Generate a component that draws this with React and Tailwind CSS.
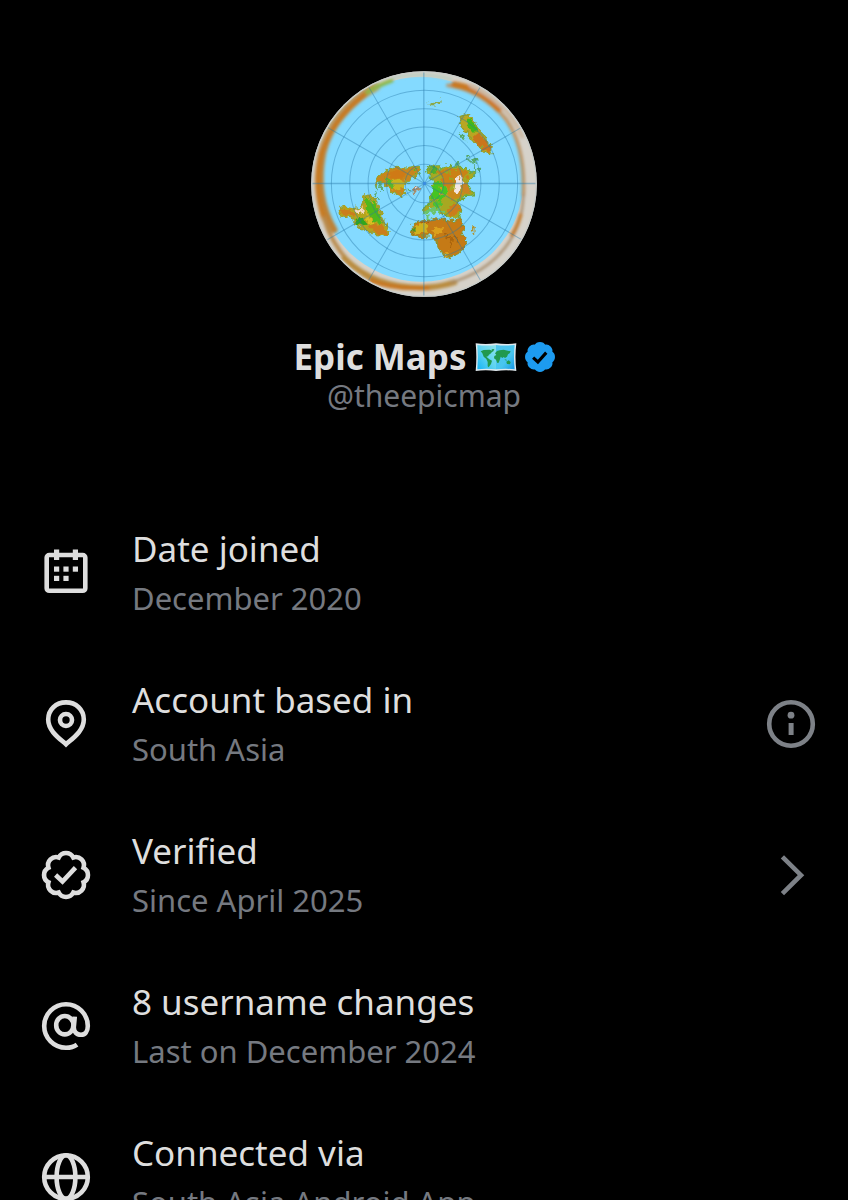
import React from 'react';

const SCALLOP =
  'M43.55 18.73 A8.2 8.2 0 0 1 43.55 33.27 A8.2 8.2 0 0 1 33.27 43.55 A8.2 8.2 0 0 1 18.73 43.55 A8.2 8.2 0 0 1 8.45 33.27 A8.2 8.2 0 0 1 8.45 18.73 A8.2 8.2 0 0 1 18.73 8.45 A8.2 8.2 0 0 1 33.27 8.45 A8.2 8.2 0 0 1 43.55 18.73 Z';

const Icon = ({ children, className = '' }) => (
  <svg
    viewBox="0 0 52 52"
    className={`size-[52px] shrink-0 ${className}`}
    fill="none"
    stroke="currentColor"
    strokeWidth="4.6"
    aria-hidden="true"
  >
    {children}
  </svg>
);

const CalendarIcon = () => (
  <Icon>
    <rect x="6.7" y="8" width="38.6" height="35.8" rx="2.6" />
    <g fill="currentColor" stroke="none">
      <rect x="14" y="2.5" width="5.2" height="10.5" />
      <rect x="32.8" y="2.5" width="5.2" height="10.5" />
      <rect x="14" y="19.5" width="5.2" height="5.2" />
      <rect x="23.4" y="19.5" width="5.2" height="5.2" />
      <rect x="32.8" y="19.5" width="5.2" height="5.2" />
      <rect x="14" y="28.8" width="5.2" height="5.2" />
      <rect x="23.4" y="28.8" width="5.2" height="5.2" />
    </g>
  </Icon>
);

const PinIcon = () => (
  <Icon>
    <path d="M26 46.3 C19.5 40.5 8.2 33 8.2 21.6 C8.2 11.5 16 4.4 26 4.4 C36 4.4 43.8 11.5 43.8 21.6 C43.8 33 32.5 40.5 26 46.3 Z" />
    <circle cx="26" cy="22" r="6" />
  </Icon>
);

const VerifiedIcon = () => (
  <Icon>
    <path d={SCALLOP} />
    <path d="M15.6 26 L22.5 32.5 L35.5 18.6" />
  </Icon>
);

const AtIcon = () => (
  <Icon>
    <path d="M37 44.6 C34 46.8 30 47.8 26 47.8 C14 47.8 4.2 38 4.2 26 C4.2 14 14 4.2 26 4.2 C38 4.2 47.8 14 47.8 26 C47.8 31.5 45 34.8 41 34.8 C36.5 34.8 33.6 31.5 33.8 27 L34.8 16.6" />
    <ellipse cx="24.8" cy="25.2" rx="8.6" ry="9.2" />
  </Icon>
);

const GlobeIcon = () => (
  <Icon>
    <circle cx="26" cy="26" r="21.8" />
    <ellipse cx="26" cy="26" rx="9.4" ry="21.8" />
    <path d="M4 26 H48" />
  </Icon>
);

const InfoIcon = () => (
  <Icon>
    <circle cx="26" cy="26" r="21.8" />
    <circle cx="26" cy="17.2" r="3.4" fill="currentColor" stroke="none" />
    <rect x="23.6" y="25" width="5" height="12" fill="currentColor" stroke="none" />
  </Icon>
);

const ChevronIcon = () => (
  <Icon>
    <path d="M17.4 7.8 L36 26.2 L17.4 44.6" />
  </Icon>
);

// Blue check next to the display name
const BlueBadge = () => (
  <svg viewBox="2 2 48 48" className="size-[30px] shrink-0" role="img" aria-label="Verified account">
    <path d={SCALLOP} fill="#1d9bf0" stroke="#1d9bf0" strokeWidth="4" strokeLinejoin="round" />
    <path d="M15 27 L22.6 34 L36 19" fill="none" stroke="#000" strokeWidth="5" />
  </svg>
);

const MapEmoji = () => (
  <svg viewBox="0 0 126 90" className="h-[30px] w-[42px] shrink-0" role="img" aria-label="World map">
    <defs>
      <linearGradient id="sea" x1="0" y1="1" x2="1" y2="0">
        <stop offset="0" stopColor="#14b4f4" />
        <stop offset="0.5" stopColor="#5fd3f0" />
        <stop offset="1" stopColor="#8ee4ec" />
      </linearGradient>
      <linearGradient id="seaRight" x1="0" y1="0" x2="1" y2="1">
        <stop offset="0" stopColor="#4fc4ec" />
        <stop offset="0.6" stopColor="#48c6f0" />
        <stop offset="1" stopColor="#1597e6" />
      </linearGradient>
    </defs>
    <path d="M2 4 Q32 8 63 4 Q94 8 124 4 Q119 45 124 87 Q94 83 63 87 Q32 83 2 87 Q6 45 2 4 Z" fill="#dfe9ee" />
    <path d="M7 9 Q34 12 63 9 V82 Q34 79 7 82 Q10 45 7 9 Z" fill="url(#sea)" />
    <path d="M63 9 Q92 12 119 9 Q115 45 119 82 Q92 79 63 82 Z" fill="url(#seaRight)" />
    <g fill="#21994e">
      <path d="M17 28 L26 24 L44 23 L53 27 L48 34 L42 38 L39 43 L34 44 L43 52 L51 56 L48 66 L41 76 L38 73 L38 60 L34 51 L26 44 L22 34 Z" />
      <path d="M50 22 L58 21 L55 28 L51 29 Z" />
      <path d="M60 34 L66 27 L74 25 L86 23 L98 26 L107 28 L104 34 L99 37 L96 44 L90 48 L86 45 L82 48 L77 44 L75 52 L71 62 L67 63 L63 53 L57 49 L58 42 L64 39 Z" />
      <path d="M94 59 L101 55 L107 60 L105 67 L96 66 Z" />
      <path d="M88 51 L96 54 L93 56 Z" />
    </g>
  </svg>
);

// Azimuthal map used as the profile picture
const Avatar = () => (
  <svg viewBox="20 19 677 677" className="size-[226px]" role="img" aria-label="Epic Maps profile picture">
    <defs>
      <clipPath id="disc">
        <circle cx="358.5" cy="357.5" r="338" />
      </clipPath>
      <filter id="soft" x="-10%" y="-10%" width="120%" height="120%">
        <feGaussianBlur stdDeviation="4" />
      </filter>
      <filter id="rough" x="-5%" y="-5%" width="110%" height="110%">
        <feTurbulence type="fractalNoise" baseFrequency="0.07" numOctaves="2" seed="4" result="n" />
        <feDisplacementMap in="SourceGraphic" in2="n" scale="26" xChannelSelector="R" yChannelSelector="G" />
        <feGaussianBlur stdDeviation="2" />
      </filter>
    </defs>
    <g clipPath="url(#disc)">
      <rect x="20" y="19" width="677" height="677" fill="#d6d2ca" />
      <circle cx="350" cy="343" r="307" fill="#84daff" />
      <g filter="url(#soft)" fill="none" strokeLinecap="round">
        <path d="M215 66 C130 110 72 180 52 270 C38 350 44 430 82 492" stroke="#b5a878" strokeWidth="26" />
        <path d="M205 72 C130 120 80 180 56 260 C40 340 45 420 90 495" stroke="#bd8135" strokeWidth="19" />
        <path d="M185 88 C120 140 75 195 50 265 C34 330 38 400 58 460" stroke="#c77a20" strokeWidth="14" />
        <path d="M58 460 C85 545 140 610 210 650" stroke="#b98b4e" strokeWidth="12" />
        <path d="M188 84 C208 70 228 60 262 48" stroke="#8cb84a" strokeWidth="12" />
        <path d="M120 580 C180 640 260 668 350 668 C390 668 420 662 450 652" stroke="#b98b3e" strokeWidth="17" />
        <path d="M200 647 C250 668 310 672 370 668" stroke="#c8741a" strokeWidth="12" />
        <path d="M430 62 C490 65 560 110 605 165 C640 215 660 290 656 390" stroke="#b99567" strokeWidth="11" />
        <path d="M450 60 C505 68 545 92 582 132" stroke="#ca7824" strokeWidth="20" />
        <path d="M500 62 C580 100 625 150 652 215" stroke="#cdbba6" strokeWidth="14" />
        <path d="M656 390 C655 450 640 500 600 550 C560 600 500 635 440 652" stroke="#a58a68" strokeWidth="7" />
        <path d="M648 450 C640 480 632 495 622 510" stroke="#c27a2c" strokeWidth="11" />
        <path d="M265 40 C310 28 380 26 440 44" stroke="#b9cdc0" strokeWidth="8" />
      </g>
      <g filter="url(#rough)">
        {/* North America */}
        <path d="M222 338 L240 318 L272 308 L305 310 L338 305 L350 314 L332 330 L318 348 L300 352 L296 370 L303 388 L288 392 L262 378 L246 366 L238 348 L222 352 L217 372 L212 352 Z" fill="#c9861a" stroke="#93a636" strokeWidth="4" />
        <path d="M250 348 L288 342 L306 352 L294 372 L272 376 Z" fill="#c9b41c" />
        <path d="M240 340 L262 350 L268 370 L250 362 Z M320 318 L338 310 L330 326 Z" fill="#58b82a" />
        <path d="M250 322 L290 318 L306 330 L284 340 L256 336 Z" fill="#cf7a18" />
        <path d="M322 370 L340 364 L348 374 L334 392 L322 384 Z" fill="#a98a68" />
        <path d="M330 372 L340 370 L336 382 Z" fill="#f0dde0" />
        <path d="M304 362 L316 356 M308 376 L320 380 M344 330 L352 322" stroke="#5cab70" strokeWidth="5" />
        {/* Asia and Europe */}
        <path d="M366 310 L392 304 L410 310 L440 302 L482 306 L498 322 L512 325 L498 340 L488 352 L500 378 L508 390 L484 392 L466 404 L462 418 L470 440 L466 460 L440 462 L420 448 L398 452 L380 436 L356 440 L360 424 L380 412 L378 394 L392 380 L386 352 L374 330 Z" fill="#a7a820" stroke="#6fa83a" strokeWidth="4" />
        <path d="M400 318 L440 310 L480 316 L490 334 L478 350 L452 352 L436 376 L418 362 L408 338 Z" fill="#ca8118" />
        <path d="M374 312 L394 308 L402 322 L386 326 Z" fill="#4fb02c" />
        <path d="M418 318 L432 314 L436 326 Z M462 312 L476 310 L478 320 Z M436 340 L446 336 L444 350 Z" fill="#8fae24" />
        <path d="M384 358 L410 352 L428 374 L420 398 L398 408 L382 400 Z" fill="#45c522" />
        <path d="M400 362 L412 366 L406 376 Z M408 388 L418 384 L414 396 Z" fill="#c9a41c" />
        <path d="M430 378 L456 372 L482 386 L462 400 L436 406 Z" fill="#c98a1c" />
        <path d="M474 352 L488 356 L498 380 L486 388 L472 376 Z" fill="#c98420" />
        <path d="M424 436 L462 412 L468 440 L444 450 Z" fill="#cc7c1c" />
        <path d="M386 412 L406 408 L416 422 L396 430 Z" fill="#4fc030" />
        <path d="M455 340 L474 332 L472 366 L458 390 L448 384 Z" fill="#f2e6e2" />
        <path d="M350 444 L390 424 L420 440 L396 450 L372 462 Z" fill="#6cc46a" />
        <path d="M360 450 L400 440 L416 452 L380 458 Z M430 452 L446 460 L462 458 L444 466 Z M374 424 L384 430 L374 434 Z" fill="#84daff" />
        {/* Africa */}
        <path d="M320 492 L336 472 L362 464 L396 462 L440 470 L468 464 L478 484 L474 508 L484 522 L478 548 L460 566 L436 576 L412 566 L400 542 L396 518 L376 512 L342 516 L324 508 Z" fill="#c57a14" stroke="#93902a" strokeWidth="4" />
        <path d="M328 490 L352 474 L372 486 L366 506 L336 508 Z" fill="#cfb21c" />
        <path d="M380 490 L420 486 L408 506 L388 508 Z M410 560 L430 558 L440 570 L424 572 Z" fill="#dba01e" />
        <path d="M320 494 L330 484 L330 506 Z" fill="#4c9a22" />
        <path d="M416 510 L440 520 L436 552 M448 512 L462 530 M352 472 L380 478" stroke="#a8620e" strokeWidth="5" fill="none" />
        <path d="M504 486 L514 490 L512 506 L502 502 Z" fill="#b0922e" />
        {/* South America */}
        <path d="M102 434 L118 426 L146 432 L164 428 L178 416 L178 396 L190 388 L212 398 L220 424 L234 452 L240 478 L254 502 L236 510 L206 508 L188 494 L160 484 L140 458 L108 452 Z" fill="#b5a41e" stroke="#9aa030" strokeWidth="4" />
        <path d="M182 398 L206 402 L218 430 L230 458 L232 476 L208 470 L192 446 L182 424 Z" fill="#50b81c" />
        <path d="M190 396 L204 404 L200 414 Z M180 430 L194 440 L188 452 Z" fill="#d0b41e" />
        <path d="M104 434 L140 436 L150 452 L116 450 Z M192 482 L228 476 L250 504 L210 506 Z" fill="#cb7d1c" />
        <path d="M150 462 L176 458 L184 476 L162 482 Z" fill="#30a61c" />
        <path d="M152 438 L174 428 L176 440 L160 450 Z" fill="#f3dcc4" />
        <path d="M184 450 L200 462 L210 480 L192 474 Z" fill="#d9c020" />
        {/* Australia and the islands */}
        <path d="M460 156 L492 150 L508 168 L520 194 L542 216 L562 250 L558 266 L540 262 L518 236 L496 222 L488 206 L472 188 Z" fill="#b9a620" stroke="#8fa030" strokeWidth="4" />
        <path d="M488 158 L508 172 L518 200 L500 200 L486 180 Z" fill="#3fb81c" />
        <path d="M508 208 L534 214 L560 250 L554 262 L534 250 L512 230 Z" fill="#ca751c" />
        <path d="M460 202 L474 210 L486 230 L474 224 Z M498 280 L518 282 L520 298 L506 292 Z M514 314 L530 308 L526 330 Z M482 268 L494 274 L488 280 Z M450 298 L466 292 L462 302 Z" fill="#55a866" />
        <path d="M486 280 L504 296 L512 322 L504 334" stroke="#58a878" strokeWidth="5" fill="none" />
        <path d="M212 356 L222 376 M224 346 L232 372 M214 384 L222 404" stroke="#5cab70" strokeWidth="4" />
        <path d="M368 118 L386 115 L412 103 L410 115 L388 122 Z" fill="#8ca848" />
      </g>
      {/* Graticule */}
      <g stroke="#2678a8" strokeOpacity="0.42" strokeWidth="3" fill="none">
        <circle cx="360" cy="356" r="58" />
        <circle cx="360" cy="356" r="114" />
        <circle cx="360" cy="356" r="169" />
        <circle cx="360" cy="356" r="224" />
        <circle cx="360" cy="356" r="279" />
        <path d="M20 356 H700 M358 18 V696" strokeWidth="4" />
        <path d="M66 186 L654 526 M66 526 L654 186 M190 62 L530 650 M190 650 L530 62" />
      </g>
      <circle cx="360" cy="356" r="5" fill="#3a8de0" />
    </g>
    <circle cx="358.5" cy="357.5" r="336" fill="none" stroke="#c9cdca" strokeWidth="4" />
  </svg>
);

const rows = [
  { id: 'joined', icon: CalendarIcon, title: 'Date joined', detail: 'December 2020' },
  { id: 'based', icon: PinIcon, title: 'Account based in', detail: 'South Asia', action: InfoIcon, actionLabel: 'About account location' },
  { id: 'verified', icon: VerifiedIcon, title: 'Verified', detail: 'Since April 2025', action: ChevronIcon, actionLabel: 'Verification details' },
  { id: 'username', icon: AtIcon, title: '8 username changes', detail: 'Last on December 2024' },
  { id: 'connected', icon: GlobeIcon, title: 'Connected via', detail: 'South Asia Android App' },
];

const InfoRow = ({ row }) => {
  const RowIcon = row.icon;
  const ActionIcon = row.action;

  return (
    <li className="flex items-center gap-10 pb-[53px]">
      <RowIcon />
      <div className="min-w-0 flex-1">
        <h2 className="text-[35px] leading-[50px]">{row.title}</h2>
        <p className="text-[31px] leading-[48px] text-[#757980]">{row.detail}</p>
      </div>
      {ActionIcon && (
        <button type="button" aria-label={row.actionLabel} className="cursor-pointer text-[#7d8187]">
          <ActionIcon />
        </button>
      )}
    </li>
  );
};

const App = () => {
  return (
    <main className="h-screen overflow-hidden bg-black font-['Noto_Sans',sans-serif] text-[#dedede]">
      <header className="flex flex-col items-center pt-[71px]">
        <Avatar />
        <div className="mt-9 flex items-center gap-2">
          <h1 className="text-[35px] leading-[48px] font-bold">Epic Maps</h1>
          <MapEmoji />
          <BlueBadge />
        </div>
        <p className="text-[30px] leading-[30px] text-[#757980]">@theepicmap</p>
      </header>

      <ul className="mt-[113px] pr-[31px] pl-10">
        {rows.map((row) => (
          <InfoRow key={row.id} row={row} />
        ))}
      </ul>
    </main>
  );
};

export default App;
